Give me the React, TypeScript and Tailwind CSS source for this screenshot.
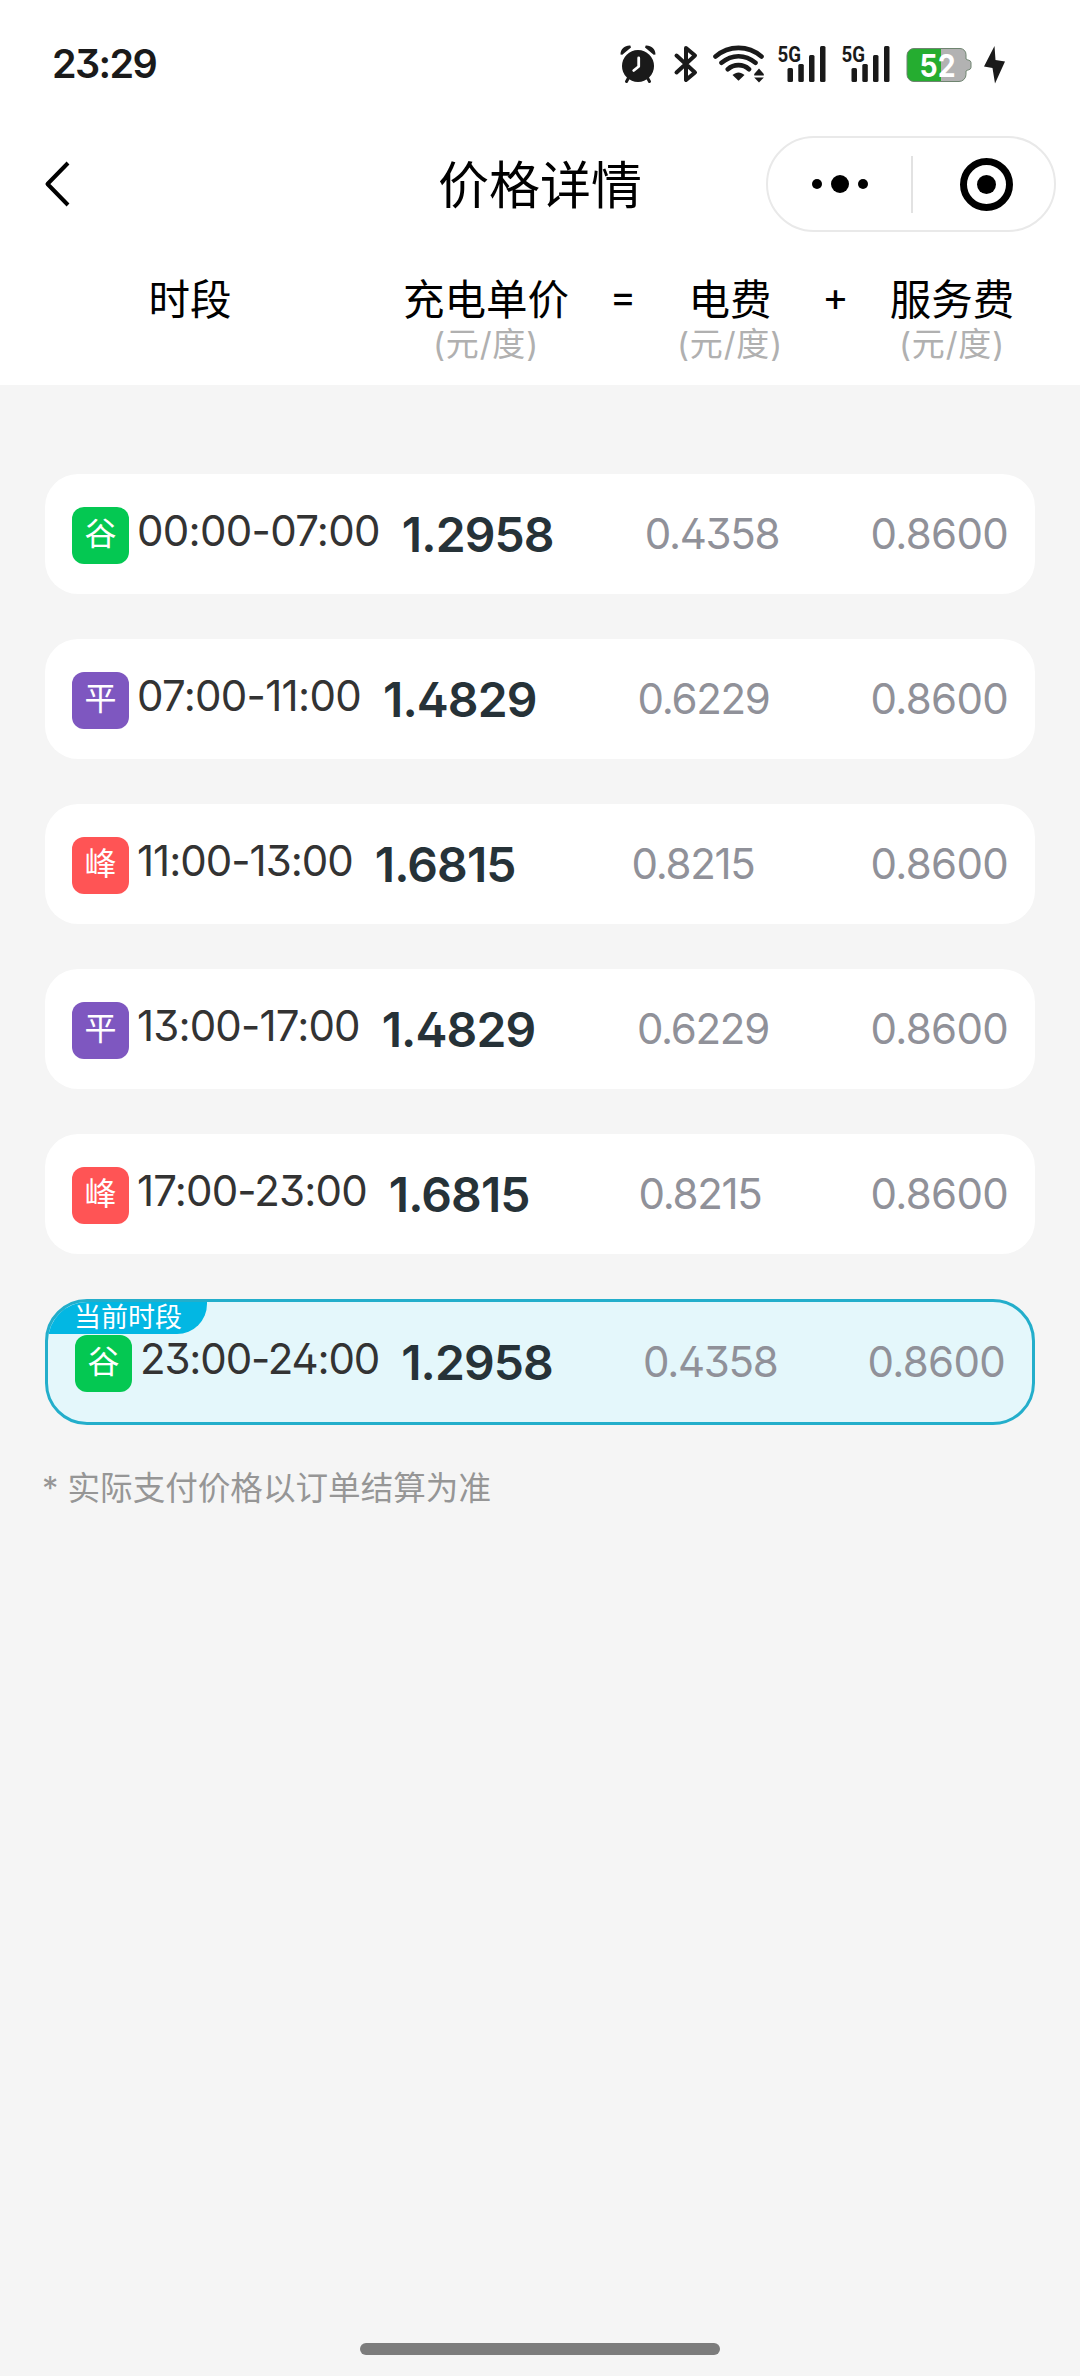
type PeriodKind = 'valley' | 'flat' | 'peak';

interface PricePeriod {
  kind: PeriodKind;
  time: string;
  tracking: string;
  total: string;
  electricity: string;
  service: string;
  current?: boolean;
}

const periods: PricePeriod[] = [
  { kind: 'valley', time: '00:00-07:00', tracking: 'tracking-[-0.7px]', total: '1.2958', electricity: '0.4358', service: '0.8600' },
  { kind: 'flat', time: '07:00-11:00', tracking: 'tracking-[-0.7px]', total: '1.4829', electricity: '0.6229', service: '0.8600' },
  { kind: 'peak', time: '11:00-13:00', tracking: 'tracking-[-1px]', total: '1.6815', electricity: '0.8215', service: '0.8600' },
  { kind: 'flat', time: '13:00-17:00', tracking: 'tracking-[-0.85px]', total: '1.4829', electricity: '0.6229', service: '0.8600' },
  { kind: 'peak', time: '17:00-23:00', tracking: 'tracking-[-0.85px]', total: '1.6815', electricity: '0.8215', service: '0.8600' },
  { kind: 'valley', time: '23:00-24:00', tracking: 'tracking-[-1.15px]', total: '1.2958', electricity: '0.4358', service: '0.8600', current: true },
];

const kinds = {
  valley: { label: '谷', color: 'bg-[#04c852]' },
  flat: { label: '平', color: 'bg-[#7e57c0]' },
  peak: { label: '峰', color: 'bg-[#ff5455]' },
};

function AlarmIcon() {
  return (
    <svg width="38" height="40" viewBox="0 0 38 40" fill="#1a1a1a">
      <circle cx="19" cy="21" r="16" />
      <path d="M1.5 9.5C1.5 4 6 .2 11.3.6L12 2.6 3.3 9.8ZM36.5 9.5C36.5 4 32 .2 26.7.6L26 2.6 34.7 9.8Z" />
      <path d="M10 32 7.5 36.5M28 32 30.5 36.5" stroke="#1a1a1a" strokeWidth="3" strokeLinecap="round" />
      <path d="M19.7 13v8.5l-5 4" fill="none" stroke="#fff" strokeWidth="2.8" strokeLinecap="round" strokeLinejoin="round" />
    </svg>
  );
}

function BluetoothIcon() {
  return (
    <svg width="27" height="40" viewBox="0 0 27 40" fill="none" stroke="#1a1a1a" strokeWidth="4" strokeLinecap="round" strokeLinejoin="round">
      <path d="m3.5 10.5 18.5 17L13 35V3l9 7.5L3.5 27.5" />
    </svg>
  );
}

function WifiIcon() {
  return (
    <svg width="54" height="40" viewBox="0 0 54 40" fill="none" stroke="#1a1a1a" strokeWidth="4.6" strokeLinecap="round">
      <path d="M3.5 11.5C17 0 36 0 49.5 11.5M9.5 17.8C20 9 33 9 43.5 17.8M15.8 24.2C22 18.8 31 18.8 37 24.2" />
      <path d="M20.5 30c4-3.5 8-3.5 12 0l-6 5.8Z" fill="#1a1a1a" stroke="none" />
      <path d="m47 23.5 4.8 5.5v1.5h-9.6V29ZM47 37.5l4.8-5h-9.6Z" fill="#1a1a1a" stroke="none" />
    </svg>
  );
}

function SignalIcon() {
  return (
    <svg width="50" height="40" viewBox="0 0 50 40" fill="#1a1a1a" className="overflow-visible">
      <text x="0.5" y="16.5" textLength="23.5" lengthAdjust="spacingAndGlyphs" className="font-['Roboto'] text-[22px] font-bold">
        5G
      </text>
      <rect x="10.5" y="23" width="5.5" height="14" rx="1.5" />
      <rect x="21.3" y="19" width="5.5" height="18" rx="1.5" />
      <rect x="32" y="10" width="5.5" height="27" rx="1.5" />
      <rect x="43" y="1" width="5.5" height="36" rx="1.5" />
    </svg>
  );
}

function BatteryIcon() {
  return (
    <svg width="68" height="40" viewBox="0 0 68 40">
      <path d="M9 3.5h46a6 6 0 0 1 6 6V14c1 1.2 5 1 5 3.5v5c0 2.5-4 2.3-5 3.5v3.5a7 7 0 0 1-7 7H9a7 7 0 0 1-7-7v-19a7 7 0 0 1 7-7Z" fill="#b2b2b2" />
      <path d="M36 3.5H9a7 7 0 0 0-7 7v19a7 7 0 0 0 7 7h27Z" fill="#25ad30" />
      <path d="M9 3.5h46a6 6 0 0 1 6 6V14c1 1.2 5 1 5 3.5v5c0 2.5-4 2.3-5 3.5v3.5a7 7 0 0 1-7 7H9a7 7 0 0 1-7-7v-19a7 7 0 0 1 7-7Z" fill="none" stroke="#6f8470" strokeWidth="1" />
      <text x="14.5" y="31.5" textLength="36" lengthAdjust="spacingAndGlyphs" fill="#fff" className="font-['Inter'] text-[31px] font-bold">
        52
      </text>
    </svg>
  );
}

function BoltIcon() {
  return (
    <svg width="23" height="40" viewBox="0 0 23 40" fill="#1a1a1a">
      <path d="M11.5 1 1 21.5l8.5 1.5L12 38.5 22 16.5l-9.500-1.5Z" />
    </svg>
  );
}

function StatusBar() {
  return (
    <div className="flex h-[126px] items-start pt-[45px] pr-[74px] pl-[52px]">
      <span className="mr-auto text-[39.5px] leading-[38px] font-semibold tracking-[-1.6px] text-[#1a1a1a]">23:29</span>
      <AlarmIcon />
      <div className="ml-4">
        <BluetoothIcon />
      </div>
      <div className="ml-3">
        <WifiIcon />
      </div>
      <div className="ml-[11px] flex gap-3.5">
        <SignalIcon />
        <SignalIcon />
        <BatteryIcon />
      </div>
      <div className="ml-2.5">
        <BoltIcon />
      </div>
    </div>
  );
}

function NavBar() {
  return (
    <div className="grid h-[116px] grid-cols-3 items-center pr-[24px] pl-[42px]">
      <svg width="28" height="50" viewBox="0 0 28 50" fill="none" stroke="#000" strokeWidth="4" strokeLinejoin="round">
        <path d="M26 4 5.5 25 26 46" />
      </svg>
      <h1 className="mt-1 -ml-[18px] text-center text-[51px] leading-[60px] whitespace-nowrap text-black">价格详情</h1>
      <div className="flex h-24 w-[290px] items-center justify-self-end rounded-full border-2 border-[#e9e9e9]">
        <div className="flex w-[143px] items-center justify-center gap-[9px]">
          <i className="size-2.5 rounded-full bg-black" />
          <i className="size-[18px] rounded-full bg-black" />
          <i className="size-2.5 rounded-full bg-black" />
        </div>
        <div className="h-[57px] w-0.5 bg-[#e2e2e2]" />
        <div className="flex flex-1 justify-center pl-[5px]">
          <div className="flex size-[53px] items-center justify-center rounded-full border-[7px] border-black">
            <i className="size-[19px] rounded-full bg-black" />
          </div>
        </div>
      </div>
    </div>
  );
}

function HeaderCell({ title, unit }: { title: string; unit?: boolean }) {
  return (
    <div className="text-center text-[41.5px] leading-[50px] whitespace-nowrap text-black">
      {title}
      {unit && <div className="text-[33px] leading-[38px] tracking-[0.8px] text-[#b0b0b0]">(元/度)</div>}
    </div>
  );
}

function Operator({ sign }: { sign: string }) {
  return <div className="-mt-0.5 text-center text-[40px] leading-[48px] text-black">{sign}</div>;
}

function TableHeader() {
  return (
    <div className="grid h-[143px] grid-cols-[380px_212px_62px_152px_59px_174px] items-start pt-[33px]">
      <HeaderCell title="时段" />
      <HeaderCell title="充电单价" unit />
      <Operator sign="=" />
      <HeaderCell title="电费" unit />
      <Operator sign="+" />
      <HeaderCell title="服务费" unit />
    </div>
  );
}

function PeriodRow({ period }: { period: PricePeriod }) {
  const kind = kinds[period.kind];
  return (
    <div
      className={
        period.current
          ? 'relative flex h-[126px] items-center justify-between overflow-hidden rounded-[42px] border-3 border-[#23aecb] bg-[#e4f7fb] px-[27px]'
          : 'flex h-[120px] items-center justify-between rounded-[33px] bg-white px-[27px]'
      }
    >
      {period.current && (
        <div className="absolute -top-[3px] -left-[3px] h-[35px] w-[162px] rounded-br-[30px] bg-[#02b7e3] pl-[29px] text-[27px] leading-[37px] text-white">
          当前时段
        </div>
      )}
      <div className="flex items-center">
        <div className={`mt-0.5 flex size-[57px] justify-center rounded-xl text-[32px] leading-[54px] text-white ${kind.color}`}>{kind.label}</div>
        <span className={`mb-[7px] ml-2 text-[42px] leading-[50px] text-[#333] ${period.tracking}`}>{period.time}</span>
        <span className="mt-0.5 ml-[22px] text-[48px] leading-[56px] font-semibold tracking-[-0.9px] text-[#263238]">{period.total}</span>
      </div>
      <span className="text-[42px] leading-[50px] tracking-[-1.3px] text-[#909199]">{period.electricity}</span>
      <span className="text-[42px] leading-[50px] tracking-[-0.7px] text-[#909199]">{period.service}</span>
    </div>
  );
}

export default function App() {
  return (
    <div className="flex h-[2376px] w-[1080px] flex-col bg-[#f5f5f5] font-['Inter','Noto_Sans_CJK_SC',sans-serif] [font-feature-settings:'cv09','cv02']">
      <div className="bg-white">
        <StatusBar />
        <NavBar />
        <TableHeader />
      </div>

      <div className="flex flex-col gap-[45px] px-[45px] pt-[89px]">
        {periods.map((period) => (
          <PeriodRow key={period.time} period={period} />
        ))}
      </div>

      <p className="mt-[38px] pl-[42px] text-[32.6px] leading-[50px] text-[#969696]">* 实际支付价格以订单结算为准</p>

      {/* Home indicator */}
      <div className="mx-auto mt-auto mb-[21px] h-3 w-[360px] rounded-full bg-[#7c7c7c]" />
    </div>
  );
}
